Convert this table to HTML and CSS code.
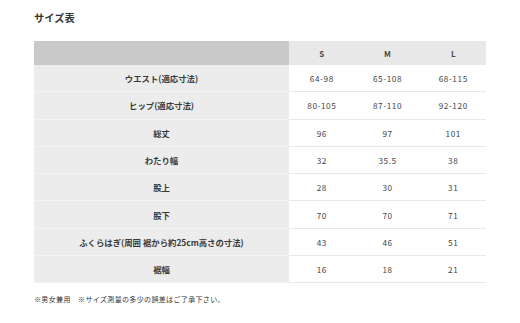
FILE: index.html
```html
<!DOCTYPE html>
<html lang="ja">
<head>
<meta charset="utf-8">
<link rel="stylesheet" href="styles.css">
</head>
<body>
<div class="page">
  <h1 class="title">サイズ表</h1>
  <table class="size-table">
    <thead>
      <tr>
        <th class="corner"></th>
        <th>S</th>
        <th>M</th>
        <th>L</th>
      </tr>
    </thead>
    <tbody>
      <tr><th>ウエスト(適応寸法)</th><td>64-98</td><td>65-108</td><td>68-115</td></tr>
      <tr><th>ヒップ(適応寸法)</th><td>80-105</td><td>87-110</td><td>92-120</td></tr>
      <tr><th>総丈</th><td>96</td><td>97</td><td>101</td></tr>
      <tr><th>わたり幅</th><td>32</td><td>35.5</td><td>38</td></tr>
      <tr><th>股上</th><td>28</td><td>30</td><td>31</td></tr>
      <tr><th>股下</th><td>70</td><td>70</td><td>71</td></tr>
      <tr><th>ふくらはぎ(周囲 裾から約25cm高さの寸法)</th><td>43</td><td>46</td><td>51</td></tr>
      <tr><th>裾幅</th><td>16</td><td>18</td><td>21</td></tr>
    </tbody>
  </table>
  <p class="note">※男女兼用　※サイズ測量の多少の誤差はご了承下さい。</p>
</div>
</body>
</html>
```

FILE: styles.css
```css
html, body {
  margin: 0;
  padding: 0;
  background: #ffffff;
}

body {
  font-family: "Noto Sans CJK JP", "Noto Sans", sans-serif;
  color: #333333;
}

.page {
  padding: 10px 34px 0 34px;
}

.title {
  margin: 0;
  font-size: 10.3px;
  line-height: 16px;
  font-weight: bold;
  color: #333333;
}

.size-table {
  margin-top: 15px;
  width: 452px;
  border-collapse: collapse;
  table-layout: fixed;
}

.size-table th,
.size-table td {
  padding: 0;
  text-align: center;
  vertical-align: middle;
}

.size-table thead th {
  height: 24px;
  background: #e8e8e8;
  font-size: 8px;
  font-weight: bold;
  color: #4a4a4a;
  width: 65.7px;
}

.size-table thead th.corner {
  width: 255px;
  background: #c9c9c9;
}

.size-table tbody th {
  height: 26.3px;
  background: #ececec;
  border-bottom: 1px solid #f3f3f3;
  font-size: 8.4px;
  font-weight: bold;
  color: #3a3a3a;
}

.size-table tbody td {
  height: 26.3px;
  background: #ffffff;
  border-bottom: 1px solid #e9e9e9;
  font-size: 8.2px;
  letter-spacing: 0.6px;
  color: #444444;
}

.note {
  margin: 11px 0 0 0;
  font-size: 7px;
  line-height: 10px;
  letter-spacing: 0.35px;
  color: #333333;
}
```
